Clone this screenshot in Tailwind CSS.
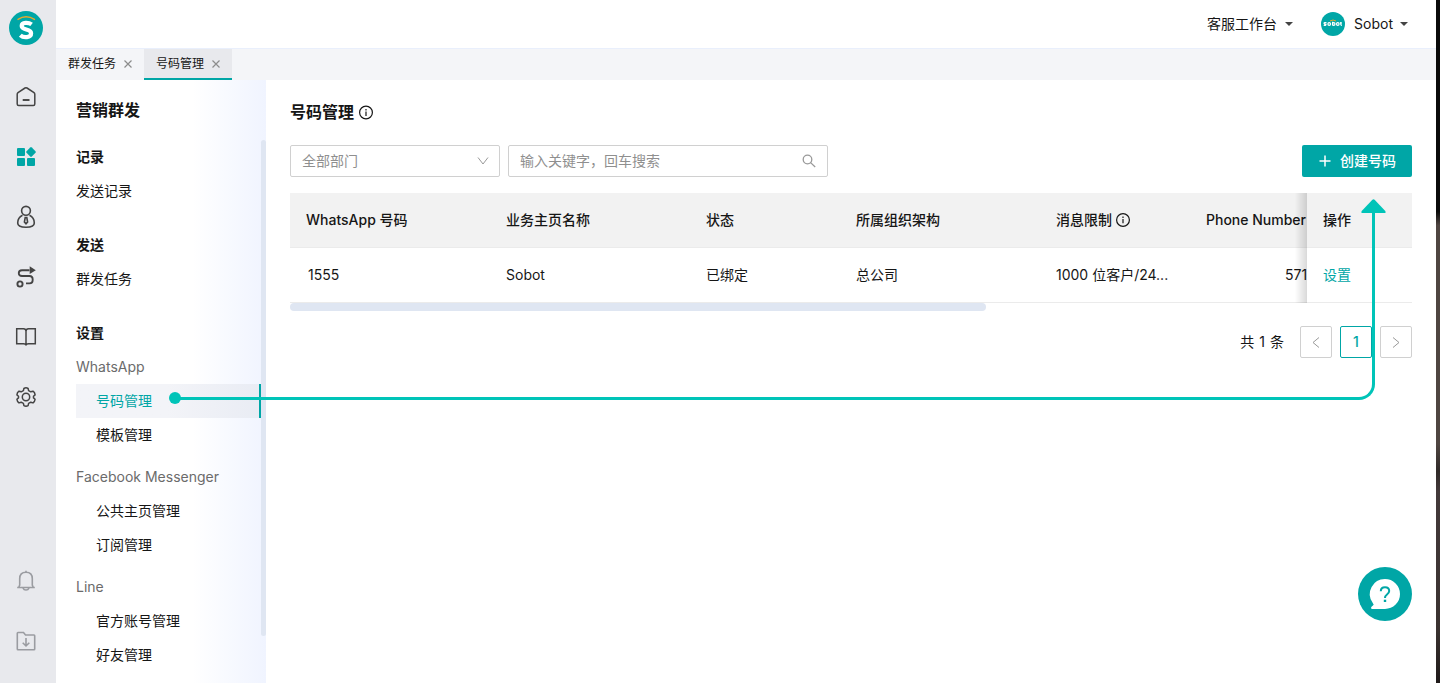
<!DOCTYPE html>
<html lang="zh-CN">
<head>
<meta charset="utf-8">
<meta name="viewport" content="width=device-width, initial-scale=1">
<title>号码管理</title>
<script src="https://cdn.jsdelivr.net/npm/@tailwindcss/browser@4"></script>
</head>
<body class="relative flex h-screen overflow-hidden bg-white font-['Inter','Noto_Sans_CJK_SC',sans-serif] text-sm text-[#161616]">

<!-- Icon rail -->
<nav aria-label="主导航" class="flex w-14 shrink-0 flex-col items-center bg-[#e8e9ed] pr-1 text-[#444]">
  <a href="#" aria-label="Sobot" class="mt-[11px] block">
    <svg class="size-[34px]" viewBox="0 0 34 34" fill="none"><circle cx="17" cy="17" r="17" fill="#00a6a6"/><path d="M9 8.400Q17 3.200 25.500 8.400" stroke="#e8a92c" stroke-width="1.400" stroke-linecap="round"/><path d="M22.600 13.400C19.900 11.400 12.700 10.700 12.700 15C12.700 19.600 22.100 17.300 22.100 22.200C22.100 26.900 14.600 27.200 11.300 24.200" stroke="#fff" stroke-width="4.200"/></svg>
  </a>
  <a href="#" aria-label="首页" class="mt-10 block">
    <svg class="size-6" viewBox="0 0 24 24" fill="none" stroke="currentColor" stroke-width="1.500"><path d="M3.200 9.200Q3.200 8.200 4 7.600L11 3Q12 2.400 13 3L20 7.600Q20.800 8.200 20.800 9.200V19Q20.800 20.500 19.300 20.500H4.700Q3.200 20.500 3.200 19Z"/><path d="M8.700 15H15.500" stroke-width="1.900"/></svg>
  </a>
  <a href="#" aria-label="应用" class="mt-9 block text-[#00a6a6]">
    <svg class="size-6" viewBox="0 0 24 24" fill="currentColor"><rect x="3" y="3" width="8" height="8" rx="1"/><rect x="3" y="13" width="8" height="8" rx="1"/><rect x="13" y="13" width="8" height="8" rx="1"/><path d="M16.200 2.400Q17 1.600 17.800 2.400L21.500 6.200Q22.200 7 21.500 7.800L17.800 11.600Q17 12.400 16.200 11.600L12.500 7.800Q11.800 7 12.500 6.200Z"/></svg>
  </a>
  <a href="#" aria-label="客户" class="mt-9 block">
    <svg class="size-6" viewBox="0 0 24 24" fill="none" stroke="currentColor" stroke-width="1.600"><circle cx="12" cy="5.800" r="4.400"/><path d="M8.500 10.300C5 12 3.700 15 3.700 18Q3.700 22.200 12 22.200T20.300 18C20.300 15 19 12 15.500 10.300"/><path d="M11.200 12.500H12.800L13.600 17L12 18.800L10.400 17Z"/></svg>
  </a>
  <a href="#" aria-label="流程" class="mt-9 block">
    <svg class="size-6" viewBox="0 0 24 24" fill="none" stroke="currentColor" stroke-width="1.900"><circle cx="6" cy="19" r="2.600"/><path d="M15.500 5.200H8Q4.800 5.200 4.800 8.100T8 11H15.500Q18.700 11 18.700 14.700T15.500 18.400H12"/><path d="M15.700 1.300L21.800 5.200L15.700 9Z" fill="currentColor" stroke="none"/></svg>
  </a>
  <a href="#" aria-label="知识库" class="mt-9 block">
    <svg class="size-6" viewBox="0 0 24 24" fill="none" stroke="currentColor" stroke-width="1.500"><path d="M2.700 3.800H9.500Q12 3.800 12 6.200V20.500Q12 18.800 9.500 18.800H2.700ZM21.300 3.800H14.500Q12 3.800 12 6.200V20.500Q12 18.800 14.500 18.800H21.300Z"/></svg>
  </a>
  <a href="#" aria-label="设置" class="mt-9 block">
    <svg class="size-6" viewBox="0 0 24 24" fill="none" stroke="currentColor" stroke-width="1.500" stroke-linejoin="round"><circle cx="12" cy="12" r="3.700"/><path d="M9.900 3.500Q12 2.200 14.100 3.500L14.600 5.600L16.800 6.800L19 6.200Q20.900 7.500 21.100 9.900L19.500 11.300V12.900L21.100 14.300Q20.900 16.500 19 17.900L16.800 17.200L14.600 18.400L14.100 20.600Q12 21.800 9.900 20.600L9.400 18.400L7.200 17.200L5 17.900Q3.100 16.500 2.900 14.300L4.500 12.900V11.300L2.900 9.900Q3.100 7.500 5 6.200L7.200 6.800L9.400 5.600Z"/></svg>
  </a>
  <a href="#" aria-label="通知" class="mt-auto block text-[#9a9ca1]">
    <svg class="size-6" viewBox="0 0 24 24" fill="none" stroke="currentColor" stroke-width="1.600"><path d="M12 1.800V3.200M3.200 18.500H20.800M4.700 18.500L5.700 16V9.700Q5.700 3.300 12 3.300T18.300 9.700V16L19.300 18.500M9 19Q9.800 21 12 21T15 19"/></svg>
  </a>
  <a href="#" aria-label="下载" class="mt-9 mb-[30px] block text-[#9a9ca1]">
    <svg class="size-6" viewBox="0 0 24 24" fill="none" stroke="currentColor" stroke-width="1.600"><path d="M3.300 4.300Q3.300 3.500 4 3.500H9.500L11.500 6H20Q20.700 6 20.700 6.700V20Q20.700 20.700 20 20.700H4Q3.300 20.700 3.300 20Z"/><path d="M12 9V17M8.700 13.800L12 17L15.300 13.800"/></svg>
  </a>
</nav>

<div class="flex min-w-0 flex-1 flex-col">
  <!-- Top bar -->
  <header class="flex h-12 shrink-0 items-center justify-end gap-7 px-7">
    <button type="button" class="flex items-center gap-2">客服工作台
      <svg class="h-1 w-2" viewBox="0 0 8 4" fill="#444"><path d="M0 0H8L4 4Z"/></svg>
    </button>
    <button type="button" class="flex items-center gap-[7px]">
      <span class="mr-[2px] flex size-6 items-center justify-center rounded-full bg-[#00a6a6]">
        <svg class="size-6" viewBox="0 0 24 24" fill="none" stroke="#fff" stroke-width="1.200"><path d="M9 9Q12 7 15 9" stroke="#e8a92c" stroke-width="1"/><path d="M5.500 10.700Q3 10.300 3 11.300T5 12.300Q5 14 2.700 13.200M11.600 9.700V13.300M19.800 10V12.600Q19.800 13.300 21 13.300M18.900 11H21"/><circle cx="8.200" cy="12" r="1.300"/><circle cx="12.700" cy="12" r="1.300"/><circle cx="16.800" cy="12" r="1.300"/></svg>
      </span>
      Sobot
      <svg class="h-1 w-2" viewBox="0 0 8 4" fill="#444"><path d="M0 0H8L4 4Z"/></svg>
    </button>
  </header>

  <!-- Open page tabs -->
  <div class="flex h-8 shrink-0 border-t border-[#e9effc] bg-[#f4f5f8] text-xs">
    <div class="flex items-center gap-2 border-b-2 border-transparent px-3">
      <a href="#">群发任务</a>
      <button type="button" aria-label="关闭群发任务"><svg class="size-2" viewBox="0 0 8 8" fill="none" stroke="#8c8c8c" stroke-width="1.200"><path d="M0.500 0.500L7.500 7.500M7.500 0.500L0.500 7.500"/></svg></button>
    </div>
    <div class="flex items-center gap-2 border-b-2 border-[#00a6a6] bg-[#e8e9ed] px-3">
      <a href="#" aria-current="page">号码管理</a>
      <button type="button" aria-label="关闭号码管理"><svg class="size-2" viewBox="0 0 8 8" fill="none" stroke="#8c8c8c" stroke-width="1.200"><path d="M0.500 0.500L7.500 7.500M7.500 0.500L0.500 7.500"/></svg></button>
    </div>
  </div>

  <div class="flex min-h-0 flex-1">
    <!-- Section menu -->
    <aside class="flex w-[210px] shrink-0 flex-col bg-linear-to-r from-white from-65% to-[#f0f4ff] pl-5">
      <h2 class="mt-[18px] mb-[18px] text-base leading-6 font-semibold">营销群发</h2>
      <div class="flex min-h-0 flex-1">
        <nav aria-label="营销群发" class="min-w-0 flex-1 leading-[34px]">
          <h3 class="font-semibold">记录</h3>
          <a href="#" class="block">发送记录</a>
          <h3 class="mt-5 font-semibold">发送</h3>
          <a href="#" class="block">群发任务</a>
          <h3 class="mt-5 font-semibold">设置</h3>
          <h4 class="text-[#6b6b6b]">WhatsApp</h4>
          <a href="#" aria-current="page" class="block border-r-2 border-[#00a6a6] bg-linear-to-r from-[#f3f4f8] from-50% to-[#e9ecf4] pl-5 text-[#00a6a6]">号码管理</a>
          <a href="#" class="block pl-5">模板管理</a>
          <h4 class="mt-2 text-[#6b6b6b]">Facebook Messenger</h4>
          <a href="#" class="block pl-5">公共主页管理</a>
          <a href="#" class="block pl-5">订阅管理</a>
          <h4 class="mt-2 text-[#6b6b6b]">Line</h4>
          <a href="#" class="block pl-5">官方账号管理</a>
          <a href="#" class="block pl-5">好友管理</a>
        </nav>
        <div class="mb-[47px] w-[5px] rounded-full bg-[#dfe6f2]"></div>
      </div>
    </aside>

    <!-- Page content -->
    <main class="min-w-0 flex-1 px-6 pt-5">
      <h1 class="flex items-center gap-1 text-base leading-6 font-semibold">号码管理
        <svg class="size-4" viewBox="0 0 16 16" fill="none" stroke="currentColor" stroke-width="1.200"><circle cx="8" cy="8.500" r="6.400"/><path d="M8 7.500V12M8 5V6.400"/></svg>
      </h1>

      <div class="mt-[21px] flex gap-2">
        <div class="relative w-[210px]">
          <select aria-label="部门" class="h-8 w-full appearance-none rounded-xs border border-[#d0d0d0] bg-white px-[11px] text-[#8f8f8f]"><option>全部部门</option></select>
          <svg class="pointer-events-none absolute top-[10px] right-[11px] size-3" viewBox="0 0 12 12" fill="none" stroke="#999" stroke-width="1"><path d="M1 2.500L6 9L11 2.500"/></svg>
        </div>
        <div class="relative w-80">
          <input type="text" aria-label="搜索" placeholder="输入关键字，回车搜索" class="h-8 w-full rounded-xs border border-[#d0d0d0] pr-10 pb-[2px] pl-[11px] placeholder:text-[#8f8f8f]">
          <svg class="pointer-events-none absolute top-2 right-[11px] size-4" viewBox="0 0 16 16" fill="none" stroke="#999" stroke-width="1.300"><circle cx="6.500" cy="6.500" r="4.300"/><path d="M9.600 9.600L14.200 14"/></svg>
        </div>
        <button type="button" class="ml-auto flex h-8 items-center gap-2 rounded-xs bg-[#00a6a6] px-4 font-medium text-white">
          <svg class="size-[14px]" viewBox="0 0 14 14" stroke="#fff" stroke-width="1.500"><path d="M7 1.500V12.500M1.500 7H12.500"/></svg>创建号码
        </button>
      </div>

      <div class="mt-4 overflow-hidden">
        <table class="w-[1809px] table-fixed border-separate border-spacing-0 text-left">
          <colgroup><col class="w-[200px]"><col class="w-[200px]"><col class="w-[150px]"><col class="w-[200px]"><col class="w-[150px]"><col><col class="w-[105px]"></colgroup>
          <thead class="h-[55px]">
            <tr class="bg-[#f2f2f2]">
              <th class="border-b border-[#ebebeb] px-4 font-medium">WhatsApp 号码</th>
              <th class="border-b border-[#ebebeb] px-4 font-medium">业务主页名称</th>
              <th class="border-b border-[#ebebeb] px-4 font-medium">状态</th>
              <th class="border-b border-[#ebebeb] px-4 font-medium">所属组织架构</th>
              <th class="border-b border-[#ebebeb] px-4 font-medium"><span class="flex items-center gap-[3px]">消息限制 <svg class="size-4" viewBox="0 0 16 16" fill="none" stroke="currentColor" stroke-width="1.200"><circle cx="8" cy="8" r="6.400"/><path d="M8 7V11.300M8 4.600V5.900"/></svg></span></th>
              <th class="border-b border-[#ebebeb] px-4 font-medium">Phone Number</th>
              <th class="sticky right-0 border-b border-[#ebebeb] bg-[#f2f2f2] px-4 font-medium before:absolute before:top-0 before:-bottom-px before:right-full before:w-3 before:bg-linear-to-l before:from-black/15 before:to-transparent">操作</th>
            </tr>
          </thead>
          <tbody class="h-[55px]">
            <tr>
              <td class="border-b border-[#ebebeb] px-[18px]">1555</td>
              <td class="border-b border-[#ebebeb] px-4">Sobot</td>
              <td class="border-b border-[#ebebeb] px-4">已绑定</td>
              <td class="border-b border-[#ebebeb] px-4">总公司</td>
              <td class="border-b border-[#ebebeb] px-4 whitespace-nowrap">1000 位客户/24...</td>
              <td class="border-b border-[#ebebeb] pl-[95px]">571</td>
              <td class="sticky right-0 border-b border-[#ebebeb] bg-white px-4 before:absolute before:top-0 before:-bottom-px before:right-full before:w-3 before:bg-linear-to-l before:from-black/15 before:to-transparent"><a href="#" class="text-[#00a6a6]">设置</a></td>
            </tr>
          </tbody>
        </table>
        <div class="h-2 w-[62%] rounded bg-[#dfe6f2]"></div>
      </div>

      <div class="mt-[15px] flex items-center justify-end gap-2">
        <span class="mr-2 flex gap-[5px]"><span>共</span> <span>1</span> <span>条</span></span>
        <button type="button" aria-label="上一页" class="flex size-8 items-center justify-center rounded-xs border border-[#d0d0d0]"><svg class="size-3" viewBox="0 0 12 12" fill="none" stroke="#999"><path d="M9 1.500L3 6.500L9 11.500"/></svg></button>
        <button type="button" aria-current="page" class="flex size-8 items-center justify-center rounded-xs border border-[#00a6a6] font-medium text-[#00a6a6]">1</button>
        <button type="button" aria-label="下一页" class="flex size-8 items-center justify-center rounded-xs border border-[#d0d0d0]"><svg class="size-3" viewBox="0 0 12 12" fill="none" stroke="#999"><path d="M3 1.500L9 6.500L3 11.500"/></svg></button>
      </div>
    </main>
  </div>
</div>

<!-- Window edge -->
<div class="w-1 shrink-0 bg-[linear-gradient(#0a0a0a_0%,#0a0a0a_31%,#4f4541_33%,#4f4541_65%,#302a28_69%,#43393a_72%,#3a3230_92%,#1f1a19_100%)]"></div>

<!-- Guide arrow from the menu entry to the create button -->
<div class="pointer-events-none absolute top-[200px] right-[65px] left-[175px] h-[200px] rounded-br-2xl border-r-[3px] border-b-[3px] border-[#00c4b8]">
  <span class="absolute -bottom-[7px] -left-[6px] size-3 rounded-full bg-[#00c4b8]"></span>
  <svg class="absolute -top-[1px] -right-[14px] h-[14px] w-[25px]" viewBox="0 0 25 14" fill="#00c4b8"><path d="M11.400 0.700Q12.500 -0.200 13.600 0.700L24.300 12Q25.200 14 23.500 14H1.500Q-0.200 14 0.700 12Z"/></svg>
</div>

<!-- Help -->
<button type="button" aria-label="帮助" class="absolute right-7 bottom-[62px] flex size-[54px] items-center justify-center rounded-full bg-[#00a6a6]">
  <svg class="size-[54px]" viewBox="0 0 54 54" fill="none"><path d="M27 12A15 15 0 0 1 27 42H14Q12.300 41.500 13.300 40L15.700 37.800L14.500 35.500A15 15 0 0 1 27 12Z" fill="#fff"/><path d="M22.800 24.300Q22.800 20.300 27 20.300T31.200 24Q31.200 25.800 29 27.500T27 31" stroke="#00a6a6" stroke-width="2"/><path d="M27 32.700V35" stroke="#00a6a6" stroke-width="2.400"/></svg>
</button>
</body>
</html>
